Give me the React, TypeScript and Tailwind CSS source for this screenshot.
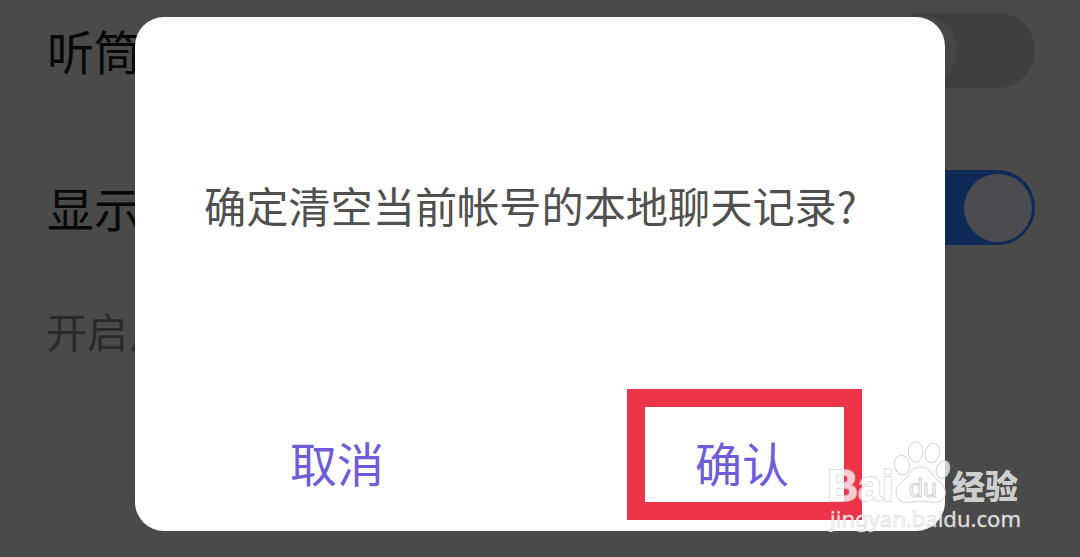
const SETTINGS = [
  { label: "听筒", on: false },
  { label: "显示", on: true },
];

function Toggle({ on }: { on: boolean }) {
  return (
    <span
      className={
        on
          ? "flex h-[75px] w-[150px] items-center justify-end rounded-full bg-[#0f2a57] pr-[3px]"
          : "flex h-[75px] w-[150px] items-center justify-start rounded-full bg-[#3d403f] pl-[3px]"
      }
    >
      <span
        className={
          on
            ? "size-[68px] rounded-full bg-[#4b4c4f]"
            : "size-[69px] rounded-full bg-[#464646]"
        }
      />
    </span>
  );
}

function Watermark() {
  return (
    <svg
      className="pointer-events-none absolute top-[432px] left-[820px]"
      width="220"
      height="110"
      viewBox="820 432 220 110"
      aria-hidden="true"
    >
      <g fill="#fff" fillOpacity="0.75" stroke="#c8c8c8" strokeOpacity="0.8" strokeWidth="1">
        <ellipse cx="902" cy="465" rx="7.5" ry="10" transform="rotate(-12 902 465)" />
        <ellipse cx="915.5" cy="452" rx="7.2" ry="10" />
        <ellipse cx="932.5" cy="453" rx="7.2" ry="10" transform="rotate(12 932.5 453)" />
        <ellipse cx="943" cy="469.500" rx="6.500" ry="9" transform="rotate(20 943 469.500)" />
        <path d="M920.5 467c6 0 9.500 3 13 9 4 6 12 8 12 16.500 0 6-5 10-11 10-5 0-8-1.500-14-1.500s-9 1.500-14 1.500c-6 0-10.500-4-10.500-10 0-7.500 7.500-10.500 11.500-16.500 4-6 7-9 13-9z" />
      </g>
      <g fontFamily="'Liberation Sans', Arial, sans-serif" opacity="0.75">
        <text
          x="827"
          y="500.500"
          fontSize="44"
          fontWeight="700"
          textLength="67"
          lengthAdjust="spacingAndGlyphs"
          fill="#fff"
          stroke="#d4d4d4"
          strokeWidth="2"
          paintOrder="stroke"
        >
          Bai
        </text>
        <text
          x="909"
          y="497"
          fontSize="26"
          textLength="28"
          lengthAdjust="spacingAndGlyphs"
          fill="#fff"
          stroke="#c8c8c8"
          strokeWidth="1.2"
        >
          du
        </text>
      </g>
      <text
        x="952"
        y="499"
        fontFamily="'Noto Sans CJK SC', sans-serif"
        fontWeight="900"
        fontSize="33"
        textLength="66"
        lengthAdjust="spacingAndGlyphs"
        fill="#cfcfcf"
      >
        经验
      </text>
      <text
        x="830"
        y="527"
        fontFamily="'Noto Sans', sans-serif"
        fontSize="22"
        textLength="191"
        lengthAdjust="spacingAndGlyphs"
        fill="#fff"
        fillOpacity="0.85"
        stroke="#c8c8c8"
        strokeOpacity="0.8"
        strokeWidth="0.6"
      >
        jingyan.baidu.com
      </text>
    </svg>
  );
}

export default function App() {
  return (
    <div className="relative h-[557px] w-[1080px] overflow-hidden bg-[#4a4a4a] font-['Noto_Sans_CJK_SC',sans-serif]">
      <div className="flex flex-col gap-[82px] pt-[13px] pr-[45px] pl-[47px]">
        {SETTINGS.map((row) => (
          <div key={row.label} className="flex h-[75px] items-center justify-between">
            <span className="pb-[2px] text-[47px] leading-none text-[#080808]">{row.label}</span>
            <Toggle on={row.on} />
          </div>
        ))}
      </div>
      <p className="mt-[65px] pl-[46px] text-[41px] leading-none text-[#2a2a2a]">
        开启<span className="pl-[2px]">后</span>
      </p>

      {/* dialog */}
      <div className="absolute inset-0 flex items-start justify-center pt-[17px]">
        <div
          role="dialog"
          className="flex h-[514px] w-[810px] flex-col justify-between rounded-[29px] bg-white"
        >
          <p className="pt-[167px] pl-[69px] text-[42.2px] leading-none whitespace-nowrap text-[#505050]">
            确定清空当前帐号的本地聊天记录?
          </p>
          <div className="flex pb-[11px] text-[47px] leading-none text-[#705cd9]">
            <button className="h-[131px] flex-1 pt-[14px] pr-[2px]">取消</button>
            <div className="flex flex-1 justify-center">
              <button className="mr-[-3px] h-[131px] w-[235px] border-[18px] border-[#ec3347] pt-[14px] pr-[5px]">
                确认
              </button>
            </div>
          </div>
        </div>
      </div>

      <Watermark />
    </div>
  );
}
